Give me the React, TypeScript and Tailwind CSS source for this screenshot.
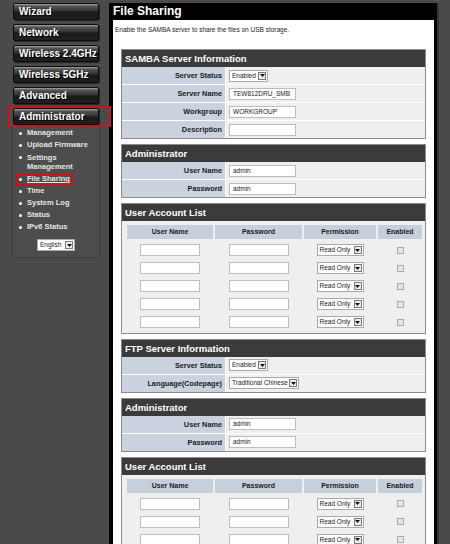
const navItems = ["Wizard", "Network", "Wireless 2.4GHz", "Wireless 5GHz", "Advanced"];

const subItems = [
  ["Management"],
  ["Upload Firmware"],
  ["Settings", "Management"],
  ["File Sharing"],
  ["Time"],
  ["System Log"],
  ["Status"],
  ["IPv6 Status"],
];

function Arrow() {
  return (
    <span className="ml-auto mr-[1px] flex h-[8px] w-[8px] items-center justify-center border border-[#7a7a7a] bg-[#ececec]">
      <svg width="5" height="3" viewBox="0 0 5 3">
        <path d="M0 0h5L2.5 3z" fill="#111" />
      </svg>
    </span>
  );
}

function Select({ value, width }: { value: string; width: string }) {
  return (
    <div className={`flex h-[12px] items-center border border-[#a9a9a9] bg-white pl-[2px] text-[6.5px] text-[#222] ${width}`}>
      <span className="whitespace-nowrap">{value}</span>
      <Arrow />
    </div>
  );
}

function TextBox({ value = "", width = "w-[67px]" }: { value?: string; width?: string }) {
  return (
    <div className={`h-[12px] border border-[#bdbdbd] bg-white pl-[3px] text-[6.5px] leading-[10px] text-[#222] ${width}`}>
      {value}
    </div>
  );
}

function NavButton({ label }: { label: string }) {
  return (
    <div className="flex h-[17px] w-[86px] items-center rounded-[2px] border border-[#0c0c0c] bg-[linear-gradient(180deg,#a5a5a5_0%,#555_14%,#333_45%,#1a1a1a_55%,#202020_100%)] pl-[5px] text-[10px] font-bold text-white shadow-[1px_1px_1px_#262626] [text-shadow:1px_1px_0_#000]">
      {label}
    </div>
  );
}

function Section({ title, children }: { title: string; children: React.ReactNode }) {
  return (
    <div className="border border-[#8c8c8c]">
      <div className="h-[17px] bg-[#3b3b3b] pl-[3px] text-[9.5px] font-bold leading-[17px] text-white">{title}</div>
      {children}
    </div>
  );
}

function FieldRow({ label, first, children }: { label: string; first?: boolean; children: React.ReactNode }) {
  return (
    <div className={`flex ${first ? "h-[17px]" : "h-[18px] border-t border-white"}`}>
      <div className="w-[103px] bg-[#c9d2de] pr-[3px] text-right text-[7.3px] font-bold leading-[17px] text-[#1b1b1b]">
        {label}
      </div>
      <div className="flex flex-1 items-center border-l border-white bg-[#efefef] pl-[3px]">{children}</div>
    </div>
  );
}

function AccountList() {
  return (
    <Section title="User Account List">
      <div className="bg-[#efefef] pb-[1.5px] pl-[5px] pt-[4px]">
        <div className="grid h-[14px] grid-cols-[86px_87px_72px_44px] gap-x-[2px] text-center text-[7px] font-bold leading-[14px] text-[#1b1b1b]">
          <div className="bg-[#c6cfdc]">User Name</div>
          <div className="bg-[#c6cfdc]">Password</div>
          <div className="bg-[#c6cfdc]">Permission</div>
          <div className="bg-[#c6cfdc]">Enabled</div>
        </div>
        <div className="pt-[2px]">
          {[0, 1, 2, 3, 4].map((i) => (
            <div key={i} className="grid h-[18px] grid-cols-[86px_87px_72px_44px] items-center gap-x-[2px]">
              <div className="flex justify-center">
                <TextBox width="w-[60px]" />
              </div>
              <div className="flex justify-center">
                <TextBox width="w-[60px]" />
              </div>
              <div className="flex justify-center">
                <Select value="Read Only" width="w-[47px]" />
              </div>
              <div className="flex justify-center">
                <div className="h-[7px] w-[7px] border border-[#ababab] bg-[#e4e4e4]" />
              </div>
            </div>
          ))}
        </div>
      </div>
    </Section>
  );
}

export default function App() {
  return (
    <div className="flex h-[544px] w-[450px] overflow-hidden bg-[repeating-linear-gradient(180deg,#4e4e4e_0px,#4e4e4e_1px,#474747_1px,#474747_2px)] font-['Liberation_Sans',Arial,sans-serif]">
      {/* sidebar */}
      <aside className="w-[109px] shrink-0 pt-[3px]">
        <div className="ml-[13px] flex flex-col gap-[4px]">
          {navItems.map((n) => (
            <NavButton key={n} label={n} />
          ))}
          <div className="relative">
            <NavButton label="Administrator" />
            <span className="absolute bottom-[-2px] left-[-5px] right-[-2px] top-[-2px] border-2 border-[#c8141b]" />
          </div>
        </div>

        <div className="ml-[12px] mt-[2px] h-[131px] w-[88px] border-x border-b border-[#3a3a3a] bg-[#4d4d4d]">
          <ul>
            {subItems.map((item) => {
              const active = item[0] === "File Sharing";
              return (
                <li key={item.join(" ")} className="relative flex py-[2px] pl-[6px] text-[7.5px] font-bold leading-[8px] text-[#e6e6e6]">
                  <span className="mr-[5px] mt-[2.5px] h-[3px] w-[3px] shrink-0 rounded-full bg-white" />
                  <span className={`flex flex-col ${item.length > 1 ? "leading-[9px]" : ""} ${active ? "underline" : ""}`}>
                    {item.map((t) => (
                      <span key={t}>{t}</span>
                    ))}
                  </span>
                  {active && <span className="absolute left-[3px] top-[1px] h-[12px] w-[57px] border-2 border-[#c8141b]" />}
                </li>
              );
            })}
          </ul>
          <div className="mt-[6px] flex justify-center">
            <Select value="English" width="w-[38px]" />
          </div>
        </div>
      </aside>

      {/* main */}
      <main className="mt-[3px] flex w-[330px] shrink-0 flex-col border-r-2 border-[#383838] bg-black">
        <div className="h-[6px] bg-[linear-gradient(180deg,#c4d4ec_0%,#93abd0_55%,#5c6a80_100%)]" />
        <div className="h-[17px] pl-[4px] text-[12px] font-bold leading-[17px] text-white">File Sharing</div>
        <div className="flex-1 pl-[4px] pr-[3px]">
          <div className="h-full bg-white px-[8px] pt-[6px]">
            <p className="-ml-[6px] text-[6.5px] leading-[8px] text-[#222]">
              Enable the SAMBA server to share the files on USB storage.
            </p>
            <div className="mt-[15px] flex flex-col gap-[5px]">
              <Section title="SAMBA Server Information">
                <FieldRow label="Server Status" first>
                  <Select value="Enabled" width="w-[39px]" />
                </FieldRow>
                <FieldRow label="Server Name">
                  <TextBox value="TEW812DRU_SMB" />
                </FieldRow>
                <FieldRow label="Workgroup">
                  <TextBox value="WORKGROUP" />
                </FieldRow>
                <FieldRow label="Description">
                  <TextBox />
                </FieldRow>
              </Section>

              <Section title="Administrator">
                <FieldRow label="User Name" first>
                  <TextBox value="admin" />
                </FieldRow>
                <FieldRow label="Password">
                  <TextBox value="admin" />
                </FieldRow>
              </Section>

              <AccountList />

              <Section title="FTP Server Information">
                <FieldRow label="Server Status" first>
                  <Select value="Enabled" width="w-[39px]" />
                </FieldRow>
                <FieldRow label="Language(Codepage)">
                  <Select value="Traditional Chinese" width="w-[70px]" />
                </FieldRow>
              </Section>

              <Section title="Administrator">
                <FieldRow label="User Name" first>
                  <TextBox value="admin" />
                </FieldRow>
                <FieldRow label="Password">
                  <TextBox value="admin" />
                </FieldRow>
              </Section>

              <AccountList />
            </div>
          </div>
        </div>
      </main>
    </div>
  );
}
